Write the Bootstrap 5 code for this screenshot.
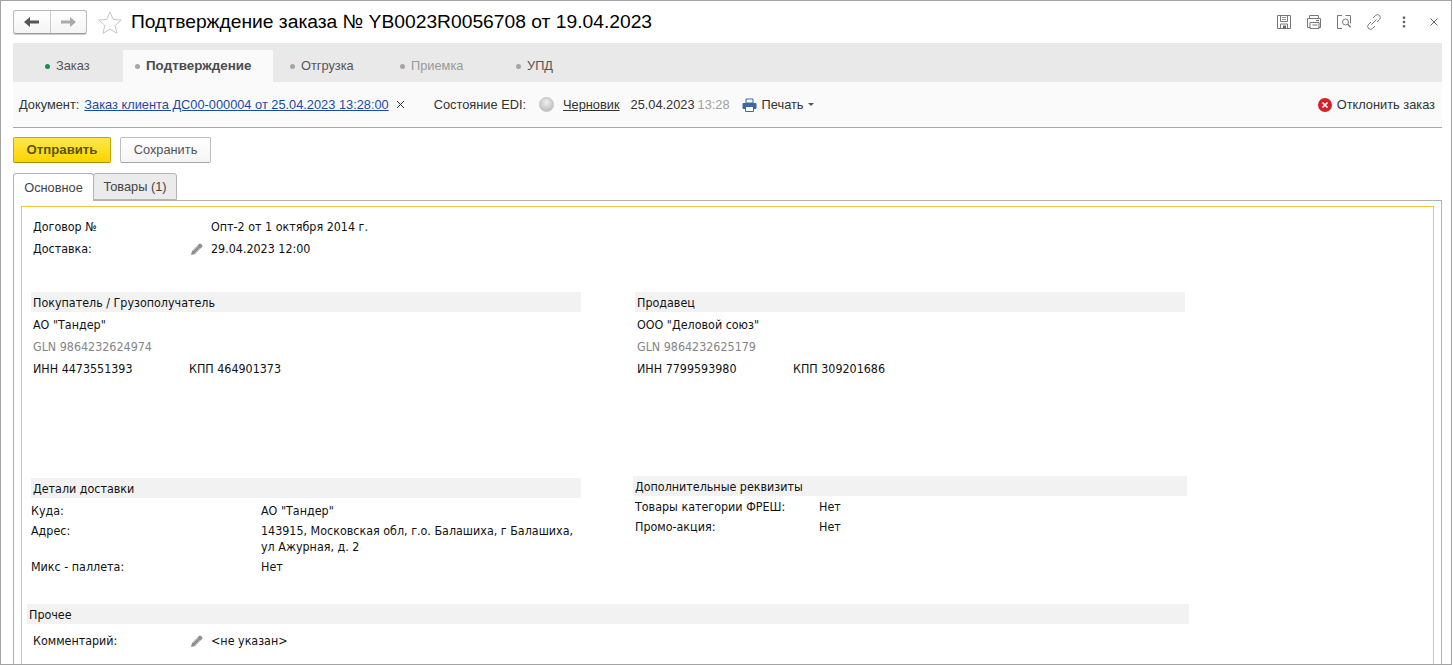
<!DOCTYPE html>
<html lang="ru"><head><meta charset="utf-8"><title>Подтверждение заказа</title>
<link rel="stylesheet" href="https://cdn.jsdelivr.net/npm/bootstrap@5.3.0/dist/css/bootstrap.min.css">
<style>
html,body{height:665px;overflow:hidden;background:#fff}
body{font-family:"Liberation Sans",Arial,sans-serif;font-size:12.8px;color:#333;line-height:16px}
.frame{width:1452px;height:665px;border:1px solid #a3a3a3;overflow:hidden;padding:0 9px 0 12px}
.frame>*{flex:none}
.titlebar{height:42px}
.navbtns{width:74px;height:24px;border:1px solid #b9b9b9;border-bottom-color:#9c9c9c;border-radius:3px;background:linear-gradient(#fff,#f4f4f4);box-shadow:0 1px 0 #ccc}
.navbtns span{flex:1;display:flex;align-items:center;justify-content:center;height:100%}
.navbtns span+span{border-left:1px solid #ccc}
.star-ic{margin-left:11px}
.pagetitle{font-size:19.25px;color:#000;line-height:24px;margin-left:9px;white-space:nowrap}
.tool-ic{width:16px;height:16px;display:block}
.tools{gap:14px;margin-right:0}
.stepbar{height:39px;background:#e9e9e9;padding-top:7px}
.stepitem{height:32px;display:flex;align-items:center;color:#555;white-space:nowrap}
.stepitem.on{background:#fafafa;font-weight:700;color:#4c4c4c;font-size:13.4px}
.stepitem.dim{color:#9a9a9a}
.dot{width:5px;height:5px;border-radius:50%;background:#a5a5a5;margin-right:6px}
.dot.green{background:#11904f}
.w110{width:110px;padding-left:17px}
.w110.first{padding-left:32px}
.w110.last{padding-left:23px}
.w150{width:150px;padding-left:12px}
.docrow{height:46px;background:#fafafa;border-bottom:1px solid #a8a8a8;padding:0 7px 0 6px;white-space:nowrap}
.doclink{color:#1a4aa8;text-decoration:underline;margin-left:5px}
.statuslink{color:#333;text-decoration:underline;margin-left:9px}
.radio-dot{width:15px;height:15px;border-radius:50%;background:radial-gradient(circle at 50% 35%,#f0f0f0,#b0b0b0);border:1px solid #c5c5c5;margin-left:13px}
.muted-time{color:#a0a0a0;margin-left:3px}
.caret-mini{display:inline-block;border-top:3px solid #555;border-left:3px solid transparent;border-right:3px solid transparent;margin-left:4px}
.gap-x{margin-left:7px}.gap-edi{margin-left:29px}.gap-date{margin-left:11px}.gap-pr{margin-left:12px}.gap-5{margin-left:5px}
.actions{height:26px;margin-top:9px}
.act-send,.act-save{height:26px;border-radius:2px;display:flex;align-items:center;justify-content:center}
.act-send{width:98px;background:linear-gradient(#ffe94a,#fbd400);border:1px solid #c4a900;border-bottom-color:#a89000;font-weight:700;color:#5b5200;font-size:13.2px}
.act-save{width:91px;background:linear-gradient(#fff,#f5f5f5);border:1px solid #bdbdbd;border-bottom-color:#a5a5a5;color:#555;margin-left:9px}
.tabsrow{height:27px;margin-top:10px;position:relative;z-index:1}
.tab-a,.tab-b{display:flex;align-items:center;justify-content:center;border:1px solid #b4b4b4;border-radius:3px 3px 0 0;color:#444}
.tab-a{width:81px;height:28px;background:#fff;border-bottom:0}
.tab-b{width:84px;height:27px;background:#ebebeb;margin-left:-1px}
.tabpanel{height:470px;border:1px solid #b0b0b0;border-bottom:0;padding:5px 7px 0 7px}
.yellowbox{height:470px;border:1px solid #f5c542;border-bottom:0;font-family:"DejaVu Sans Condensed","DejaVu Sans",sans-serif;font-stretch:condensed;font-size:12.4px;color:#111;line-height:22px;padding-top:8px}
.line{height:22px;padding-top:2px;white-space:nowrap;display:flex;align-items:center}
.secthead{height:20px;line-height:22px;background:#f2f2f2;white-space:nowrap;padding-left:2px}
.graytxt{color:#858585}
.pen{width:14px;height:14px;display:block;margin-right:7px;flex:none}
.toprows{padding-left:11px}
.slot-a{width:157px;flex:none}
.slot-b{width:178px;flex:none}
.twocol{display:flex;align-items:flex-start}
.twocol-1{margin-top:33px}
.cl{width:550px;margin-left:9px;flex:none}
.cr{width:550px;margin-left:54px;flex:none}
.cl .lines{padding:1px 0 0 2px}
.cr .lines{padding:1px 0 0 2px}
.inn{width:156px;flex:none}
.twocol-2{margin-top:97px}
.cl2{padding-top:2px}
.cr2{width:554px;margin-left:52px;flex:none}
.dl{display:flex;white-space:nowrap;height:20px;line-height:22px}
.dl.tall{height:36px;white-space:normal;padding-top:3px;line-height:16px}
.dk{width:230px;flex:none}
.dk2{width:184px;flex:none}
.dv{width:320px}
.cl2 .dls{padding-top:2px}
.cr2 .dls{padding-left:2px}
.prochee{margin:28px 0 0 5px;width:1162px}
.comment{padding-left:11px;margin-top:5px}
.slot-c{width:157px;flex:none}
</style></head><body>
<div class="frame d-flex flex-column">
 <div class="titlebar d-flex align-items-center">
  <div class="navbtns d-flex">
   <span><svg width="15" height="12" viewBox="0 0 15 12"><path d="M0 6l6-5v3.500h9v3H6V11z" fill="#555"/></svg></span>
   <span><svg width="15" height="12" viewBox="0 0 15 12"><path d="M15 6L9 1v3.500H0v3h9V11z" fill="#aaa"/></svg></span>
  </div>
  <svg class="star-ic" width="24" height="23" viewBox="0 0 24 23"><path d="M12 1l3.200 7.400 8 .7-6.100 5.300 1.900 7.900L12 18.100l-7 4.200 1.900-7.900L.8 9.100l8-.7z" fill="none" stroke="#c6c6c6"/></svg>
  <div class="pagetitle">Подтверждение заказа № YB0023R0056708 от 19.04.2023</div>
  <div class="tools ms-auto d-flex align-items-center">
   <svg class="tool-ic" viewBox="0 0 16 16" fill="none" stroke="#777"><path d="M1.500 1.500h13v13h-13z"/><path d="M4.500 1.500v6h7v-6M4.500 14.500v-4.500h7v4.500"/><path d="M6 3.500h4M6 5.500h4" stroke-width=".8"/><rect x="7" y="11.500" width="3" height="3" fill="#666" stroke="none"/></svg>
   <svg class="tool-ic" viewBox="0 0 16 16" fill="none" stroke="#777"><path d="M3.500 4V1.500h9V4M1.500 4.500h13v9h-2M4 13.500H1.500v-9"/><path d="M4 8.500h9v6H4zM6.500 11h5M10 6.500h3"/></svg>
   <svg class="tool-ic" viewBox="0 0 16 16" fill="none" stroke="#777"><path d="M6 1.500H1.500v13H6M9.500 1.500h5v8"/><circle cx="9.500" cy="8" r="3"/><path d="M11.700 10.200l3 3" stroke-width="1.500"/></svg>
   <svg class="tool-ic" viewBox="0 0 16 16" fill="none" stroke="#777"><path d="M7 4l2.500-2.500a2.800 2.800 0 014 4L11 8M9 12l-2.500 2.500a2.800 2.800 0 01-4-4L5 8M5.500 10.500l5-5"/></svg>
   <svg class="tool-ic" viewBox="0 0 16 16" fill="#666"><rect x="6.800" y="2.500" width="2.400" height="2.400"/><rect x="6.800" y="6.800" width="2.400" height="2.400"/><rect x="6.800" y="11.100" width="2.400" height="2.400"/></svg>
   <svg class="tool-ic" viewBox="0 0 16 16" fill="none" stroke="#666"><path d="M4.500 4.500l7 7M11.500 4.500l-7 7"/></svg>
  </div>
 </div>
 <div class="stepbar d-flex">
  <div class="stepitem w110 first"><i class="dot green"></i>Заказ</div>
  <div class="stepitem on w150"><i class="dot"></i>Подтверждение</div>
  <div class="stepitem w110"><i class="dot"></i>Отгрузка</div>
  <div class="stepitem dim w110"><i class="dot"></i>Приемка</div>
  <div class="stepitem w110 last"><i class="dot"></i>УПД</div>
 </div>
 <div class="docrow d-flex align-items-center">
  <span>Документ:</span><a class="doclink" href="#">Заказ клиента ДС00-000004 от 25.04.2023 13:28:00</a>
  <svg class="gap-x" width="9" height="9" viewBox="0 0 9 9" stroke="#333" fill="none"><path d="M1 1l7 7M8 1l-7 7"/></svg>
  <span class="gap-edi">Состояние EDI:</span>
  <i class="radio-dot"></i>
  <a class="statuslink" href="#">Черновик</a>
  <span class="gap-date">25.04.2023</span><span class="muted-time">13:28</span>
  <svg class="gap-pr" width="15" height="14" viewBox="0 0 15 14"><path d="M4 1h7v4H4z" fill="none" stroke="#3a6b9c"/><rect x="0.500" y="5" width="14" height="6" rx="1" fill="#3a6b9c"/><path d="M3.500 8.500h8v5h-8z" fill="#fff" stroke="#3a6b9c"/></svg>
  <span class="gap-5">Печать</span><i class="caret-mini"></i>
  <span class="ms-auto d-flex align-items-center"><svg width="14" height="14" viewBox="0 0 14 14"><circle cx="7" cy="7" r="7" fill="#d3222a"/><path d="M4.500 4.500l5 5M9.500 4.500l-5 5" stroke="#fff" stroke-width="1.600"/></svg><span class="gap-5">Отклонить заказ</span></span>
 </div>
 <div class="actions d-flex">
  <div class="act-send">Отправить</div><div class="act-save">Сохранить</div>
 </div>
 <div class="tabsrow d-flex"><div class="tab-a">Основное</div><div class="tab-b">Товары (1)</div></div>
 <div class="tabpanel">
  <div class="yellowbox">
   <div class="toprows">
    <div class="line"><div class="slot-b">Договор №</div><div>Опт-2 от 1 октября 2014 г.</div></div>
    <div class="line"><div class="slot-a">Доставка:</div><svg class="pen" viewBox="0 0 14 14"><path d="M1 13l1-4 7-7q1-1 2 0l1 1q1 1 0 2l-7 7z" fill="#8f8f8f"/><path d="M3 9l5-5M5 11l5-5" stroke="#d0d0d0" stroke-width=".7"/></svg><div>29.04.2023 12:00</div></div>
   </div>
   <div class="twocol twocol-1">
    <div class="cl">
     <div class="secthead">Покупатель / Грузополучатель</div>
     <div class="lines">
      <div class="line">АО "Тандер"</div>
      <div class="line graytxt">GLN 9864232624974</div>
      <div class="line"><div class="inn">ИНН 4473551393</div><div>КПП 464901373</div></div>
     </div>
    </div>
    <div class="cr">
     <div class="secthead">Продавец</div>
     <div class="lines">
      <div class="line">ООО "Деловой союз"</div>
      <div class="line graytxt">GLN 9864232625179</div>
      <div class="line"><div class="inn">ИНН 7799593980</div><div>КПП 309201686</div></div>
     </div>
    </div>
   </div>
   <div class="twocol twocol-2">
    <div class="cl cl2">
     <div class="secthead">Детали доставки</div>
     <div class="dls">
      <div class="dl"><div class="dk">Куда:</div><div class="dv">АО "Тандер"</div></div>
      <div class="dl tall"><div class="dk">Адрес:</div><div class="dv">143915, Московская обл, г.о. Балашиха, г Балашиха, ул Ажурная, д. 2</div></div>
      <div class="dl"><div class="dk">Микс - паллета:</div><div class="dv">Нет</div></div>
     </div>
    </div>
    <div class="cr2">
     <div class="secthead">Дополнительные реквизиты</div>
     <div class="dls">
      <div class="dl"><div class="dk2">Товары категории ФРЕШ:</div><div>Нет</div></div>
      <div class="dl"><div class="dk2">Промо-акция:</div><div>Нет</div></div>
     </div>
    </div>
   </div>
   <div class="prochee"><div class="secthead">Прочее</div></div>
   <div class="line comment"><div class="slot-c">Комментарий:</div><svg class="pen" viewBox="0 0 14 14"><path d="M1 13l1-4 7-7q1-1 2 0l1 1q1 1 0 2l-7 7z" fill="#8f8f8f"/><path d="M3 9l5-5M5 11l5-5" stroke="#d0d0d0" stroke-width=".7"/></svg><div>&lt;не указан&gt;</div></div>
  </div>
 </div>
</div>
</body></html>
